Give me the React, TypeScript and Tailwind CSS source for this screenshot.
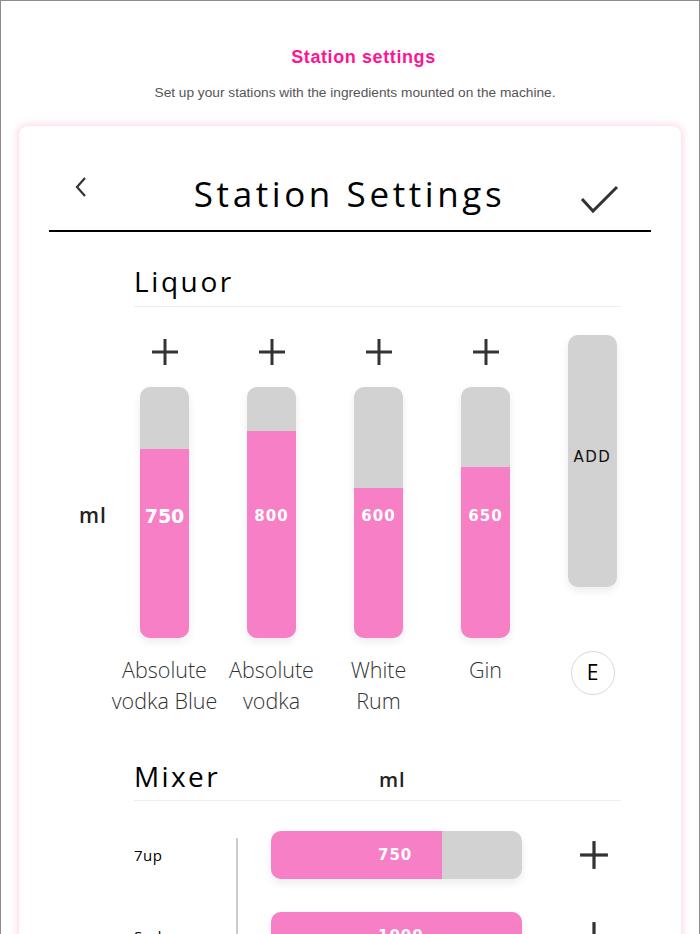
import React from "react";

function Plus({ size = 28 }: { size?: number }) {
  return (
    <svg width={size} height={size} viewBox="0 0 28 28">
      <line x1="14" y1="1" x2="14" y2="27" stroke="#333" strokeWidth="3" />
      <line x1="1" y1="14" x2="27" y2="14" stroke="#333" strokeWidth="3" />
    </svg>
  );
}

type Liquor = { name: string[]; value: number; big?: boolean };

const liquors: Liquor[] = [
  { name: ["Absolute", "vodka Blue"], value: 750, big: true },
  { name: ["Absolute", "vodka"], value: 800 },
  { name: ["White", "Rum"], value: 600 },
  { name: ["Gin"], value: 650 },
];

// fill heights in px measured from reference (bar height 251)
const fillHeights = [189, 207, 150, 171];

function VBar({ value, fill, big }: { value: number; fill: number; big?: boolean }) {
  return (
    <div className="relative w-[49px] h-[251px] rounded-[10px] overflow-hidden bg-[#d2d2d2] shadow-[0_4px_8px_rgba(0,0,0,0.08)]">
      <div
        className="absolute left-0 right-0 bottom-0 bg-[#f77fc6]"
        style={{ height: fill }}
      />
      <div className="absolute inset-0 flex items-center justify-center pt-[8px]">
        <span
          className={
            big
              ? "text-white text-[19px] font-bold font-['DejaVu_Sans',sans-serif] tracking-[0px]"
              : "text-white text-[15px] font-bold font-['DejaVu_Sans',sans-serif] tracking-[1px]"
          }
        >
          {value}
        </span>
      </div>
    </div>
  );
}

function HBar({ value, fill }: { value: number; fill: number }) {
  return (
    <div className="relative w-[251px] h-[48px] rounded-[10px] overflow-hidden bg-[#d2d2d2] shadow-[0_4px_8px_rgba(0,0,0,0.08)]">
      <div className="absolute left-0 top-0 bottom-0 bg-[#f77fc6]" style={{ width: fill }} />
      <div className="absolute inset-0 flex items-center pl-[107px]">
        <span className="text-white text-[15px] font-bold font-['DejaVu_Sans',sans-serif] tracking-[1px]">
          {value}
        </span>
      </div>
    </div>
  );
}

export default function App() {
  return (
    <div className="w-[700px] h-[934px] overflow-hidden bg-white border-l border-r border-t border-[#8c8c8c] font-['Open_Sans',sans-serif]">
      <div className="pt-[45px] text-center">
        <h1 className="pl-[27px] text-[18px] leading-[22px] font-bold text-[#ff1493] font-['Liberation_Sans',Arial,sans-serif] tracking-[0.6px]">
          Station settings
        </h1>
        <p className="pl-[10px] mt-[17px] text-[13.7px] leading-[16px] text-[#555] font-['Liberation_Sans',Arial,sans-serif]">
          Set up your stations with the ingredients mounted on the machine.
        </p>
      </div>

      <div className="mt-[25px] mx-[18px] h-[900px] rounded-[9px] bg-white shadow-[0_0_7px_2px_rgba(255,120,190,0.28)] px-[30px]">
        {/* header */}
        <div className="flex items-start justify-between pt-[44px] h-[104px]">
          <svg width="16" height="22" viewBox="0 0 16 22" className="ml-[24px] mt-[6px]">
            <polyline points="12,2 4,11 12,20" fill="none" stroke="#333" strokeWidth="2.2" />
          </svg>
          <div className="text-[35px] leading-[48px] text-black font-medium tracking-[3.6px] ml-[30px]">
            Station Settings
          </div>
          <svg width="40" height="30" viewBox="0 0 40 30" className="mr-[31px] mt-[14px]">
            <polyline points="2,15 13,27 37,3" fill="none" stroke="#333" strokeWidth="3" />
          </svg>
        </div>
        <div className="h-[2px] bg-black" />

        {/* Liquor */}
        <div className="ml-[85px] mr-[30px] mt-[29px] border-b border-[#eeeeee] pb-[5px]">
          <div className="text-[28px] leading-[40px] tracking-[2.6px] text-black">Liquor</div>
        </div>

        <div className="flex items-start mt-[31px]">
          <div className="w-[62px] pt-[165px] pl-[26px] text-center text-[21px] leading-[24px] font-semibold text-[#222] tracking-[1px]">
            ml
          </div>
          {liquors.map((l, i) => (
            <div key={i} className="w-[107px] flex flex-col items-center">
              <Plus />
              <div className="mt-[21px]">
                <VBar value={l.value} fill={fillHeights[i]} big={l.big} />
              </div>
              <div className="mt-[16px] text-center text-[21.5px] leading-[31px] font-light text-[#333] whitespace-nowrap">
                {l.name.map((n, j) => (
                  <div key={j}>{n}</div>
                ))}
              </div>
            </div>
          ))}
          <div className="w-[107px] flex flex-col items-center -mt-[3px]">
            <div className="w-[49px] h-[252px] rounded-[10px] bg-[#d2d2d2] shadow-[0_4px_8px_rgba(0,0,0,0.08)] flex items-center justify-center pb-[8px]">
              <span className="text-[15px] tracking-[1.5px] text-[#111] font-['DejaVu_Sans',sans-serif]">
                ADD
              </span>
            </div>
            <div className="mt-[64px] w-[44px] h-[44px] rounded-full border border-[#d8d8d8] flex items-center justify-center text-[21px] text-black">
              E
            </div>
          </div>
        </div>

        {/* Mixer */}
        <div className="ml-[85px] mr-[30px] mt-[40px] border-b border-[#eeeeee] pb-[4px] flex items-end">
          <div className="text-[28px] leading-[40px] tracking-[2.4px] text-black w-[245px]">Mixer</div>
          <div className="text-[20px] leading-[30px] font-semibold text-[#222] tracking-[1px] pb-[1px]">ml</div>
        </div>

        <div className="ml-[85px] mt-[30px] flex items-start">
          <div className="w-[102px] flex flex-col gap-[33px]">
            {["7up", "Soda"].map((t) => (
              <div key={t} className="h-[48px] flex items-center text-[15px] text-black tracking-[0.5px]">
                {t}
              </div>
            ))}
          </div>
          <div className="w-[2px] bg-[#cccccc] self-stretch mt-[7px] h-[300px]" />
          <div className="ml-[33px] flex flex-col gap-[33px]">
            <HBar value={750} fill={171} />
            <HBar value={1000} fill={251} />
          </div>
          <div className="ml-[57px] flex flex-col gap-[33px]">
            {[0, 1].map((k) => (
              <div key={k} className="h-[48px] flex items-center">
                <Plus size={30} />
              </div>
            ))}
          </div>
        </div>
      </div>
    </div>
  );
}
